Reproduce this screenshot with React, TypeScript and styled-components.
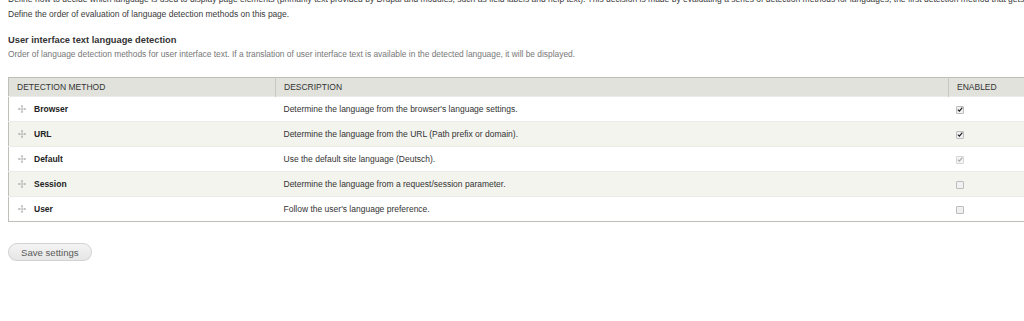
import React from "react";
import styled, { createGlobalStyle } from "styled-components";

const Global = createGlobalStyle`
  html, body { margin: 0; padding: 0; background: #fff; overflow: hidden; }
  body { font-family: "Liberation Sans", Arial, sans-serif; color: #333; }
`;

const Page = styled.div`
  width: 1040px;
  padding: 0 8px;
  margin-top: -8px;
  box-sizing: border-box;
`;

const Intro = styled.p`
  margin: 0;
  font-size: 8.5px;
  line-height: 15px;
  color: #3a3a3a;
  white-space: nowrap;
`;

const Fieldset = styled.div`
  margin-top: 11px;
`;

const Legend = styled.h3`
  margin: 0;
  font-size: 9.3px;
  font-weight: bold;
  line-height: 14px;
  color: #333;
`;

const Description = styled.p`
  margin: 0;
  font-size: 8.4px;
  line-height: 15px;
  color: #777;
  white-space: nowrap;
`;

const Table = styled.table`
  margin-top: 15px;
  width: 1040px;
  border-collapse: collapse;
  border: 1px solid #bebfb9;
  font-size: 8.5px;
`;

const HeadCell = styled.th<{ $w?: number }>`
  background: #e1e2dc;
  text-align: left;
  font-weight: normal;
  text-transform: uppercase;
  color: #333;
  height: 18px;
  padding: 0 8px;
  border-left: 1px solid #c9c9c4;
  ${(p) => (p.$w ? `width: ${p.$w}px;` : "")}
  &:first-child { border-left: none; }
`;

const Row = styled.tr<{ $even: boolean }>`
  background: ${(p) => (p.$even ? "#f3f4ee" : "#fff")};
  border-top: 1px solid #ebebe7;
`;

const Cell = styled.td`
  height: 24px;
  padding: 0 8px;
  vertical-align: middle;
  color: #333;
`;

const MethodCell = styled.div`
  display: flex;
  align-items: center;
  gap: 8px;
  padding-left: 1px;
  font-weight: bold;
  color: #222;
`;

const Handle = styled.svg`
  width: 8px;
  height: 8px;
  flex: none;
`;

const Box = styled.span<{ $disabled?: boolean }>`
  display: inline-flex;
  align-items: center;
  justify-content: center;
  width: 8px;
  height: 8px;
  margin-left: -1px;
  border: 1px solid ${(p) => (p.$disabled ? "#d6d6d6" : "#bdbdbd")};
  border-radius: 1px;
  background: ${(p) => (p.$disabled ? "#f4f4f4" : "#f0f0f0")};
  box-sizing: border-box;
  vertical-align: middle;
`;

const Button = styled.button`
  margin-top: 21px;
  height: 18px;
  padding: 0 12px;
  border-radius: 10px;
  border: 1px solid #d2d2d2;
  background: linear-gradient(#f4f4f4, #e6e6e6);
  color: #5a5a5a;
  font-family: "Liberation Sans", Arial, sans-serif;
  font-size: 9.6px;
  box-shadow: 0 1px 1px rgba(0,0,0,0.06);
`;

const DragIcon = () => (
  <Handle viewBox="0 0 9 9">
    <g stroke="#b3b3b3" strokeWidth="0.9" fill="none">
      <line x1="4.5" y1="0.5" x2="4.5" y2="8.5" />
      <line x1="0.5" y1="4.5" x2="8.5" y2="4.5" />
    </g>
    <g fill="#a3a3a3">
      <polygon points="4.5,0 3.2,1.7 5.8,1.7" />
      <polygon points="4.5,9 3.2,7.3 5.8,7.3" />
      <polygon points="0,4.5 1.7,3.2 1.7,5.8" />
      <polygon points="9,4.5 7.3,3.2 7.3,5.8" />
    </g>
  </Handle>
);

const Check = ({ on, disabled }: { on: boolean; disabled?: boolean }) => (
  <Box $disabled={disabled}>
    {on && (
      <svg width="7" height="7" viewBox="0 0 7 7">
        <path
          d="M1 3.6 L2.8 5.4 L6.2 1.2"
          stroke={disabled ? "#aaa" : "#222"}
          strokeWidth="1.4"
          fill="none"
        />
      </svg>
    )}
  </Box>
);

const rows = [
  { name: "Browser", desc: "Determine the language from the browser's language settings.", on: true },
  { name: "URL", desc: "Determine the language from the URL (Path prefix or domain).", on: true },
  { name: "Default", desc: "Use the default site language (Deutsch).", on: true, disabled: true },
  { name: "Session", desc: "Determine the language from a request/session parameter.", on: false },
  { name: "User", desc: "Follow the user's language preference.", on: false },
];

export default function App() {
  return (
    <>
      <Global />
      <Page>
        <Intro>
          Define how to decide which language is used to display page elements (primarily text provided by Drupal and modules, such as field labels and help text). This decision is made by evaluating a series of detection methods for languages; the first detection method that gets a result will determine which language is used for that type of text.
        </Intro>
        <Intro>Define the order of evaluation of language detection methods on this page.</Intro>
        <Fieldset>
          <Legend>User interface text language detection</Legend>
          <Description>
            Order of language detection methods for user interface text. If a translation of user interface text is available in the detected language, it will be displayed.
          </Description>
          <Table>
            <thead>
              <tr>
                <HeadCell $w={250}>Detection method</HeadCell>
                <HeadCell $w={656}>Description</HeadCell>
                <HeadCell>Enabled</HeadCell>
              </tr>
            </thead>
            <tbody>
              {rows.map((r, i) => (
                <Row key={r.name} $even={i % 2 === 1}>
                  <Cell>
                    <MethodCell>
                      <DragIcon />
                      {r.name}
                    </MethodCell>
                  </Cell>
                  <Cell>{r.desc}</Cell>
                  <Cell>
                    <Check on={r.on} disabled={r.disabled} />
                  </Cell>
                </Row>
              ))}
            </tbody>
          </Table>
        </Fieldset>
        <Button>Save settings</Button>
      </Page>
    </>
  );
}
